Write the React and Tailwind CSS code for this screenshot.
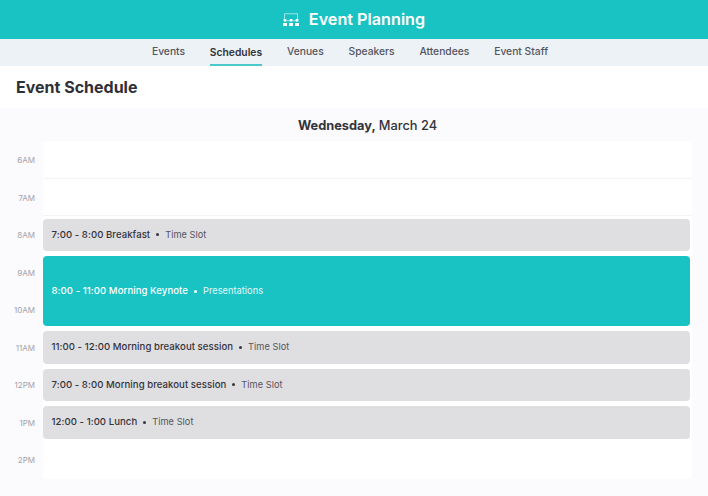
const tabs = ["Events", "Schedules", "Venues", "Speakers", "Attendees", "Event Staff"];
const hours = ["6AM", "7AM", "8AM", "9AM", "10AM", "11AM", "12PM", "1PM", "2PM"];
const events = [
  { time: "7:00 - 8:00 Breakfast", kind: "Time Slot", row: "row-start-3 row-span-1" },
  { time: "8:00 - 11:00 Morning Keynote", kind: "Presentations", row: "row-start-4 row-span-2", teal: true },
  { time: "11:00 - 12:00 Morning breakout session", kind: "Time Slot", row: "row-start-6 row-span-1" },
  { time: "7:00 - 8:00 Morning breakout session", kind: "Time Slot", row: "row-start-7 row-span-1" },
  { time: "12:00 - 1:00 Lunch", kind: "Time Slot", row: "row-start-8 row-span-1" },
];

function Logo() {
  return (
    <svg width="16" height="13" viewBox="0 0 16 13" fill="none">
      <rect x="1.5" y="0.75" width="13" height="7" stroke="#fff" strokeOpacity="0.55" strokeWidth="1" />
      <g fill="#fff">
        <rect x="0.5" y="6" width="3" height="2.5" rx="1" />
        <rect x="6.5" y="6" width="3" height="2.5" rx="1" />
        <rect x="12.5" y="6" width="3" height="2.5" rx="1" />
        <rect x="0" y="10" width="4" height="3" />
        <rect x="6" y="10" width="4" height="3" />
        <rect x="12" y="10" width="4" height="3" />
      </g>
    </svg>
  );
}

export default function App() {
  return (
    <div className="w-[708px] h-[496px] overflow-hidden bg-[#fbfafc] font-['Inter',sans-serif] flex flex-col">
      <header className="h-[39px] shrink-0 bg-[#19c3c4] flex items-center justify-center gap-[10px]">
        <Logo />
        <span className="text-white text-[16.2px] font-semibold leading-none">Event Planning</span>
      </header>
      <nav className="h-[27px] shrink-0 bg-[#ecf2f5] flex justify-center gap-[24.8px] pr-[8px]">
        {tabs.map((t) => (
          <div
            key={t}
            className={
              t === "Schedules"
                ? "h-full flex items-center text-[10.3px] font-semibold text-[#33333b] border-b-2 border-[#4cc9cc] pt-[2px]"
                : "h-full flex items-center text-[10.3px] font-medium text-[#55555e] pb-[2px]"
            }
          >
            {t}
          </div>
        ))}
      </nav>
      <div className="h-[42px] shrink-0 bg-white flex items-center pl-[16px]">
        <h1 className="text-[16px] font-bold text-[#2f2f38] leading-none">Event Schedule</h1>
      </div>
      <div className="h-[33px] shrink-0 flex items-center justify-center pl-[27px] pt-[2px] text-[12.8px] text-[#33333b]">
        <span className="font-bold">Wednesday,</span>
        <span className="ml-[3px] font-medium">March 24</span>
      </div>
      <div className="grid grid-cols-[43px_649px] grid-rows-[repeat(9,37.5px)]">
        {hours.map((h, i) => (
          <div
            key={h}
            style={{ gridRowStart: i + 1 }}
            className="col-start-1 flex items-center justify-end pr-[8px] pt-[1px] text-[8px] text-[#a3a3aa]"
          >
            {h}
          </div>
        ))}
        <div className="col-start-2 row-start-1 row-span-9 bg-white rounded-[3px] flex flex-col">
          <div className="h-[37.5px] border-b border-[#f4f3f6]" />
          <div className="h-[37.5px] border-b border-[#f4f3f6]" />
        </div>
        {events.map((e) => (
          <div
            key={e.time}
            className={
              "col-start-2 my-[2.5px] mr-[2px] rounded-[4px] flex items-center pl-[8.5px] text-[9.6px] tracking-[0.05px] " +
              e.row +
              (e.teal ? " bg-[#19c3c4] text-white" : " bg-[#dfdee1] text-[#33333b]")
            }
          >
            <span className="font-medium">{e.time}</span>
            <span className={"mx-[6px] w-[3px] h-[3px] rounded-full " + (e.teal ? "bg-white" : "bg-[#33333b]")} />
            <span className={"text-[9.2px] " + (e.teal ? "text-[#e4f9f9]" : "text-[#55555e]")}>{e.kind}</span>
          </div>
        ))}
      </div>
    </div>
  );
}
